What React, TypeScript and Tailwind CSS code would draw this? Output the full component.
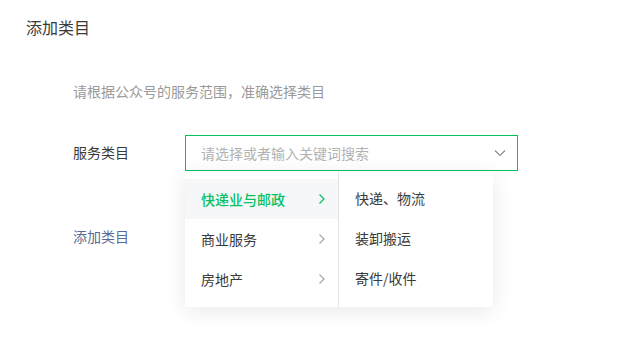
const LEFT = [
  { name: "快递业与邮政", active: true },
  { name: "商业服务", active: false },
  { name: "房地产", active: false },
];

const RIGHT = ["快递、物流", "装卸搬运", "寄件/收件"];

function ChevronRight({ className }: { className?: string }) {
  return (
    <svg width="8" height="12" viewBox="0 0 8 12" className={className}>
      <path d="M1.5 1.5 L6 6 L1.5 10.5" fill="none" stroke="currentColor" strokeWidth="1.2" />
    </svg>
  );
}

export default function App() {
  return (
    <div
      className="w-[625px] h-[361px] bg-white text-[#3a3a3a] relative overflow-hidden"
      style={{ fontFamily: '"Noto Sans CJK SC", "Liberation Sans", sans-serif' }}
    >
      <h1 className="absolute left-[26px] top-[16px] text-[16px] leading-[22px]">添加类目</h1>

      <div className="pl-[73px] pt-[81px]">
        <p className="text-[14px] leading-[20px] text-[#9a9a9a]">请根据公众号的服务范围，准确选择类目</p>

        <div className="flex mt-[34px]">
          <div className="w-[112px] text-[14px] leading-[20px] pt-[7px]">服务类目</div>
          <div className="relative">
            <div className="w-[333px] h-[36px] border border-[#07c160] flex items-center justify-between pl-[15px] pr-[11px]">
              <span className="text-[14px] text-[#b2b2b2]">请选择或者输入关键词搜索</span>
              <svg width="12" height="8" viewBox="0 0 12 8" className="text-[#8c8c8c]">
                <path d="M1 1.5 L6 6.5 L11 1.5" fill="none" stroke="currentColor" strokeWidth="1.2" />
              </svg>
            </div>
            <div className="absolute left-0 top-[36px] flex bg-white shadow-[0_4px_20px_rgba(0,0,0,0.09)] z-10">
              <div className="w-[154px] py-[8px] border-r border-[#e6e6e6]">
                {LEFT.map((item) => (
                  <div
                    key={item.name}
                    className={
                      "h-[40px] flex items-center justify-between pl-[16px] pr-[12px] text-[14px] " +
                      (item.active ? "bg-[#f6f7f8] text-[#07c160] font-medium" : "text-[#3a3a3a]")
                    }
                  >
                    <span>{item.name}</span>
                    <ChevronRight className={item.active ? "text-[#07c160]" : "text-[#a8a8a8]"} />
                  </div>
                ))}
              </div>
              <div className="w-[154px] pt-[7px] pb-[9px]">
                {RIGHT.map((name) => (
                  <div key={name} className="h-[40px] flex items-center pl-[16px] text-[14px] text-[#3a3a3a]">
                    {name}
                  </div>
                ))}
              </div>
            </div>
          </div>
        </div>

        <div className="mt-[55px] text-[14px] leading-[20px] text-[#576b95]">添加类目</div>
      </div>
    </div>
  );
}
